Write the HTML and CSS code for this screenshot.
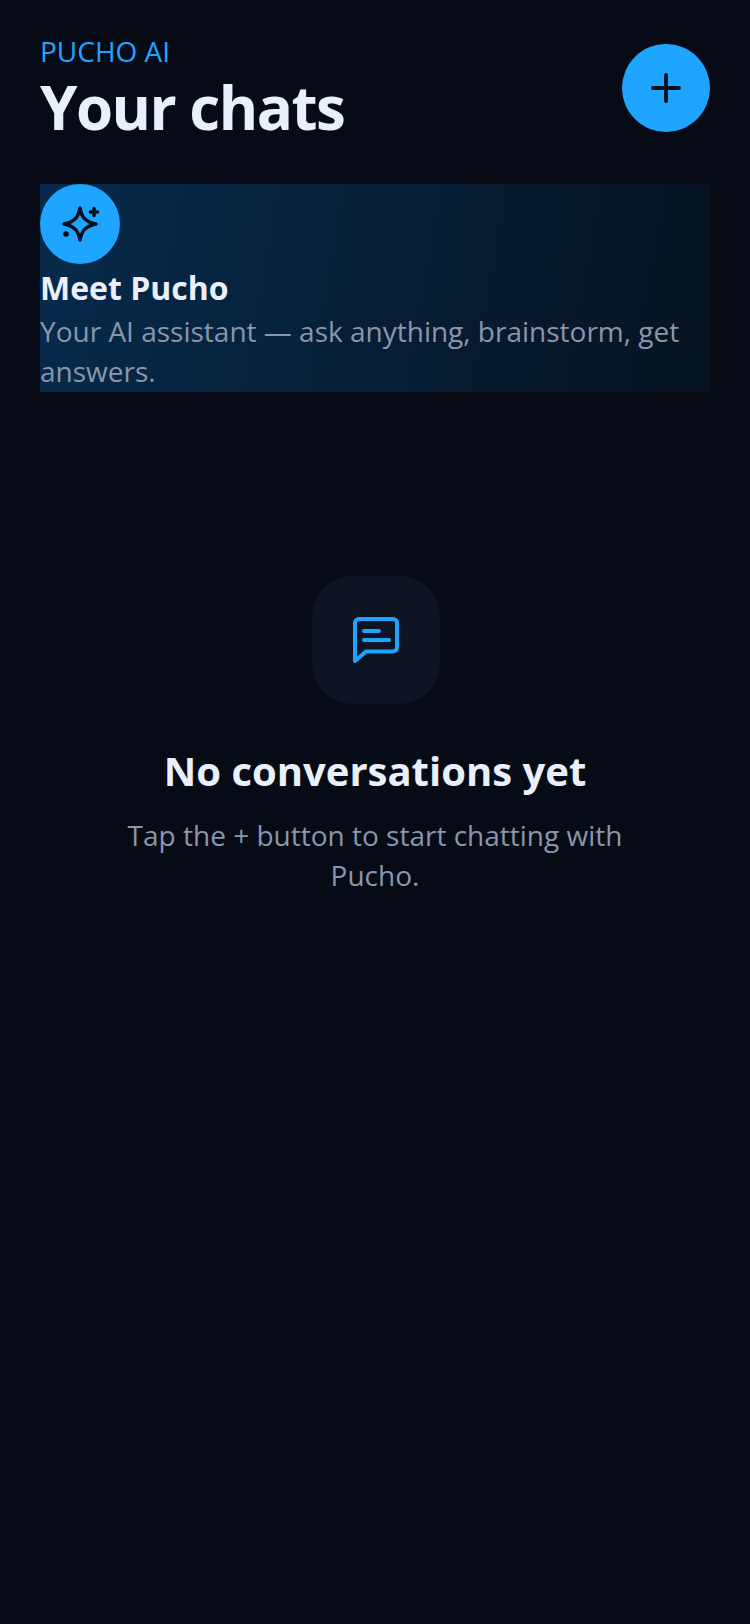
FILE: index.html
```html
<!DOCTYPE html>
<html>
<head>
<link rel="stylesheet" href="styles.css">
</head>
<body>
	<div class="page">
		<div class="header">
			<div class="titles">
				<p class="brand">PUCHO AI</p>
				<h1 class="title">Your chats</h1>
			</div>
			<div class="fab">
				<svg width="36" height="36" viewBox="0 0 36 36" fill="none" stroke="#081020" stroke-width="3.8" stroke-linecap="round"><path d="M18 5v26M5 18h26"/></svg>
			</div>
		</div>
		<div class="card">
			<div class="avatar">
				<svg width="44" height="44" viewBox="0 0 44 44" fill="none" stroke="#081020" stroke-width="3.6" stroke-linecap="round" stroke-linejoin="round">
					<path d="M22 6c1.500 9 5.500 14 16 16-10.500 2-14.500 7-16 16-1.500-9-5.500-14-16-16 10.500-2 14.500-7 16-16z"/>
					<path d="M36 6.500v7M32.500 10h7"/>
					<path d="M8 32h.1" stroke-width="5.500"/>
				</svg>
			</div>
			<h2 class="card-title">Meet Pucho</h2>
			<p class="card-text">Your AI assistant — ask anything, brainstorm, get answers.</p>
		</div>
		<div class="empty">
			<div class="empty-icon">
				<svg width="48" height="48" viewBox="0 0 48 48" fill="none" stroke="#1ea5ff" stroke-width="4" stroke-linecap="round" stroke-linejoin="round">
					<path d="M3 45V7a4 4 0 0 1 4-4h34a4 4 0 0 1 4 4v24.500a4 4 0 0 1-4 4H14z"/>
					<path d="M12 15h15M12 24h25"/>
				</svg>
			</div>
			<h3 class="empty-title">No conversations yet</h3>
			<p class="empty-text">Tap the + button to start chatting with Pucho.</p>
		</div>
	</div>
</body>
</html>
```

FILE: styles.css
```css
html,body{
	margin: 0;
	padding: 0;
}
body{
	background: #070b16;
	font-family: "Open Sans", "Liberation Sans", sans-serif;
}
p,h1,h2,h3{
	margin: 0;
}
.page{
	width: 750px;
	height: 1624px;
	box-sizing: border-box;
	padding: 31px 40px 0;
	overflow: hidden;
}
.header{
	display: flex;
	justify-content: space-between;
	align-items: flex-start;
}
.brand{
	font-size: 28px;
	line-height: 40px;
	color: #1ea5ff;
}
.title{
	font-size: 60px;
	line-height: 72px;
	font-weight: 700;
	color: #e9effb;
	letter-spacing: -1.500px;
}
.fab{
	width: 88px;
	height: 88px;
	margin-top: 13px;
	border-radius: 50%;
	background: #1ea5ff;
	display: flex;
	align-items: center;
	justify-content: center;
}
.card{
	margin-top: 41px;
	height: 208px;
	background: linear-gradient(100deg, #072a4c, #061320);
}
.avatar{
	width: 80px;
	height: 80px;
	border-radius: 50%;
	background: #1ea5ff;
	display: flex;
	align-items: center;
	justify-content: center;
}
.card-title{
	font-size: 32px;
	line-height: 48px;
	font-weight: 700;
	color: #e9effb;
}
.card-text{
	margin-top: -1px;
	font-size: 28px;
	line-height: 40px;
	color: #8a96ad;
}
.empty{
	margin-top: 184px;
	display: flex;
	flex-direction: column;
	align-items: center;
}
.empty-icon{
	width: 128px;
	height: 128px;
	margin-left: 2px;
	border-radius: 40px;
	background: #0e1422;
	display: flex;
	align-items: center;
	justify-content: center;
}
.empty-title{
	margin-top: 39px;
	font-size: 40px;
	line-height: 56px;
	font-weight: 700;
	color: #e9effb;
}
.empty-text{
	margin-top: 16px;
	width: 520px;
	font-size: 28px;
	line-height: 40px;
	color: #8a96ad;
	text-align: center;
}
```
